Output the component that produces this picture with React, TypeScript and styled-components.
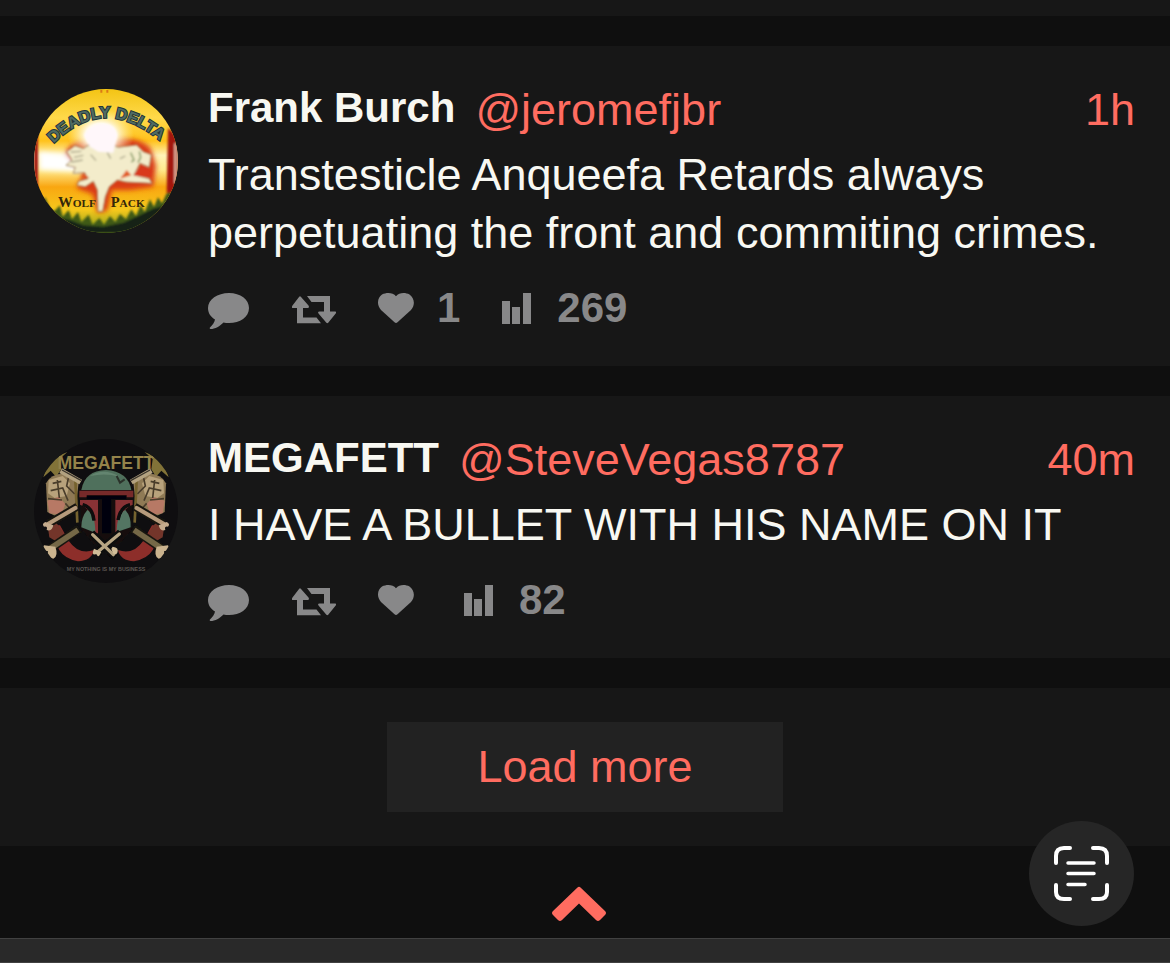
import React from "react";
import styled, { createGlobalStyle } from "styled-components";

const GlobalStyle = createGlobalStyle`
  * { box-sizing: border-box; }
  body {
    margin: 0;
    background: #0f0f0f;
    color: #f8f8f2;
    font-family: "Liberation Sans", Arial, Helvetica, sans-serif;
  }
`;

const Page = styled.div`
  min-height: 100vh;
  display: flex;
  flex-direction: column;
`;

const Timeline = styled.main`
  display: flex;
  flex-direction: column;
  gap: 30px;
`;

const PreviousCard = styled.div`
  height: 16px;
  background: #171717;
`;

const Card = styled.article`
  display: flex;
  gap: 30px;
  padding: 38px 35px 34px 34px;
  background: #171717;
`;

const AvatarLink = styled.a`
  flex: none;
  width: 144px;
  height: 144px;
  margin-top: 5px;
  border-radius: 50%;
  overflow: hidden;

  svg { display: block; width: 100%; height: 100%; }
`;

const Content = styled.div`
  flex: 1;
  min-width: 0;
`;

const Header = styled.header`
  display: flex;
  align-items: flex-start;
  margin-bottom: 10px;
`;

const Name = styled.a`
  margin-right: 20px;
  color: #f8f8f2;
  font-size: 42px;
  font-weight: 700;
  line-height: 48px;
  text-decoration: none;
`;

const Handle = styled.a`
  color: #ff6c60;
  font-size: 45px;
  line-height: 52px;
  text-decoration: none;
`;

const Time = styled(Handle)`
  margin-left: auto;
`;

const Message = styled.p`
  margin: 0 0 22px;
  font-size: 45px;
  line-height: 58px;
`;

const Metrics = styled.div`
  display: flex;
  align-items: center;
  gap: 42px;
  height: 48px;
`;

const Metric = styled.button<{ $icon: number }>`
  display: flex;
  align-items: center;
  gap: 15px;
  padding: 0;
  border: 0;
  background: none;
  color: #888889;
  font: 700 42px/48px "Liberation Sans", Arial, Helvetica, sans-serif;
  cursor: pointer;

  svg {
    flex: none;
    display: block;
    width: ${(p) => p.$icon}px;
    height: 48px;
    fill: currentColor;
  }
`;

const LoadCard = styled.div`
  display: flex;
  justify-content: center;
  padding: 34px;
  background: #171717;
`;

const LoadButton = styled.button`
  width: 396px;
  height: 90px;
  border: 0;
  background: #222;
  color: #ff6c60;
  font: 45px/52px "Liberation Sans", Arial, Helvetica, sans-serif;
  cursor: pointer;
`;

const TopArea = styled.nav`
  flex: 1;
  display: flex;
  justify-content: center;
  align-items: flex-start;
  min-height: 92px;
  padding: 39px 12px 0 0;
`;

const TopLink = styled.a`
  display: block;
  width: 56px;
  height: 38px;

  svg { display: block; }
`;

const Toolbar = styled.footer`
  height: 25px;
  border-top: 1px solid #414141;
  border-bottom: 1px solid #414141;
  background: #292929;
`;

const ScanButton = styled.button`
  position: fixed;
  right: 36px;
  bottom: 37px;
  width: 105px;
  height: 105px;
  padding: 0;
  border: 0;
  border-radius: 50%;
  background: #262626;
  cursor: pointer;

  svg { display: block; }
`;

function WolfAvatar() {
  return (
    <svg viewBox="42 27 432 432" aria-hidden="true">
      <defs>
        <linearGradient id="sky" x1="0" y1="0" x2="0" y2="1">
          <stop offset="0" stopColor="#f3c414" />
          <stop offset="0.2" stopColor="#ffd94a" />
          <stop offset="0.36" stopColor="#ffc21c" />
          <stop offset="0.46" stopColor="#fff3b8" />
          <stop offset="0.56" stopColor="#ffeb8e" />
          <stop offset="0.68" stopColor="#f9a611" />
          <stop offset="0.84" stopColor="#f6c81c" />
          <stop offset="1" stopColor="#7d9a1c" />
        </linearGradient>
        <radialGradient id="glow">
          <stop offset="0" stopColor="#fff" />
          <stop offset="0.45" stopColor="#fffdf4" stopOpacity="0.95" />
          <stop offset="1" stopColor="#fff2a0" stopOpacity="0" />
        </radialGradient>
        <filter id="soft"><feGaussianBlur stdDeviation="3" /></filter>
        <filter id="softer"><feGaussianBlur stdDeviation="8" /></filter>
        <path id="arch" d="M104 188 Q250 44 416 180" />
      </defs>
      <rect x="42" y="27" width="432" height="432" fill="url(#sky)" />
      <g filter="url(#softer)">
        <path d="M58 215 L170 225 L175 275 L58 270Z" fill="#fff" />
        <path d="M135 218 Q165 172 205 188 L300 175 Q365 175 392 205 L408 258 L400 320 L330 330 L275 330 L262 392 L232 398 L218 342 L170 325 L190 280Z" fill="#d93a14" />
      </g>
      <ellipse cx="242" cy="165" rx="100" ry="78" fill="url(#glow)" />
      <g filter="url(#soft)">
        <path d="M42 150 H54 V330 H42Z M444 145 L474 170 V340 H440Z" fill="#a31708" />
        <path d="M466 190 V310" stroke="#f3d6c0" strokeWidth="5" />
        <path d="M140 215 L165 197 L190 206 L214 190 L270 190 L294 202 L350 195 L370 215 L394 224 L388 262 L360 250 L342 285 L388 296 L396 310 L318 306 L292 300 L268 320 L256 350 L248 394 L234 394 L232 330 L220 304 L196 320 L172 316 L176 304 L204 296 L194 278 L160 280 L166 262 L138 256 L156 240Z" fill="#f3eccb" stroke="#a2835d" strokeWidth="3" />
        <path d="M192 165 Q212 130 250 132 Q285 132 292 165 L280 218 L235 215 L210 200Z" fill="#fff7fa" />
        <path d="M152 216 L184 214 M162 232 L190 226 M154 246 L188 240 M212 224 L228 242 M262 218 L272 236 M300 236 L316 228" fill="none" stroke="#aaa68a" strokeWidth="4" />
        <path d="M332 218 L342 240 L334 246 M358 214 L362 232 L354 248" stroke="#8fa06c" strokeWidth="5" fill="none" />
        <path d="M340 286 L366 256 L394 272 L390 294Z" fill="#d9371b" />
        <path d="M180 290 L196 284 L208 294Z M300 296 L320 270 L334 286Z" fill="#e15b22" />
        <path d="M42 330 L64 370 L76 352 L90 388 L102 394 L120 376 L128 410 L146 390 L156 418 L174 396 L184 426 L206 404 L218 434 L238 414 L252 434 L270 408 L286 426 L300 402 L318 418 L334 388 L348 408 L362 374 L374 396 L390 358 L402 380 L414 352 L426 370 L440 340 L474 335 V459 H42Z" fill="#405a16" />
        <path d="M42 395 L80 388 L110 412 L150 420 L190 436 L250 440 L310 428 L350 410 L400 386 L474 364 V459 H42Z" fill="#122419" />
      </g>
      <text textAnchor="middle" fontFamily="Liberation Sans Narrow, Liberation Sans, sans-serif" fontWeight="700" fontSize="48" fill="#4f6b62" stroke="#24353a" strokeWidth="6" paintOrder="stroke">
        <textPath href="#arch" startOffset="50%">DEADLY DELTA</textPath>
      </text>
      <g fontFamily="Liberation Serif, serif" fontWeight="700" fill="#352709">
        <text x="114" y="382" fontSize="44">W<tspan fontSize="34">OLF</tspan></text>
        <text x="272" y="380" fontSize="44">P<tspan fontSize="34">ACK</tspan></text>
      </g>
      <path d="M244 30 V38 M262 30 V38" stroke="#dc7b16" strokeWidth="6" />
    </svg>
  );
}

function SkullSide() {
  return (
    <g>
      <path d="M78 160 Q94 126 145 132 L176 158 L170 208 L154 250 L118 264 L82 246Z" fill="#8f7a55" />
      <path d="M86 150 L128 138 L150 160 L140 198 L104 204 L84 190Z" fill="#b8a27b" />
      <path d="M82 212 L116 200 L136 222 L124 254 L88 250Z" fill="#b77965" />
      <path d="M98 160 L124 154 M92 182 L128 174 L144 212 M112 150 L118 204 M146 140 L140 168 L164 192 M84 206 L126 210 M136 220 L154 240" stroke="#4a3d2c" strokeWidth="5" fill="none" />
      <path d="M166 148 L172 278" stroke="#74622e" strokeWidth="8" />
      <path d="M108 286 Q94 380 174 394 Q215 392 222 360 Q176 376 146 332 L120 286Z" fill="#8d2e2b" />
      <path d="M82 280 L110 280 L132 310 L112 336 L88 322Z" fill="#73362b" />
      <path d="M84 282 L172 230" stroke="#191511" strokeWidth="24" />
      <path d="M84 282 L166 234" stroke="#b69b7b" strokeWidth="13" strokeLinecap="round" />
      <path d="M76 276 Q64 282 72 290 Q84 288 80 300 Q96 306 100 286" fill="#c5ab8d" />
      <path d="M82 362 L178 296" stroke="#171411" strokeWidth="26" />
      <path d="M90 356 L174 300" stroke="#756846" strokeWidth="17" />
      <path d="M72 346 Q62 360 84 364 Q78 384 100 386 Q116 378 106 350Z" fill="#cab38e" />
      <path d="M122 122 L182 156" stroke="#b3a280" strokeWidth="16" />
      <path d="M126 120 L184 152" stroke="#39342b" strokeWidth="4" />
    </g>
  );
}

function HelmetAvatar() {
  return (
    <svg viewBox="42 27 432 432" aria-hidden="true">
      <defs>
        <filter id="worn"><feGaussianBlur stdDeviation="2" /></filter>
      </defs>
      <rect x="42" y="27" width="432" height="432" fill="#0f0e10" />
      <g filter="url(#worn)">
        <path d="M70 142 Q84 88 142 66 L118 88 L124 118 L108 140 L92 122Z" fill="#827337" />
        <path d="M446 142 Q432 88 374 66 L398 88 L394 118 L408 140 L424 122Z" fill="#827337" />
        <SkullSide />
        <g transform="translate(516 0) scale(-1 1)"><SkullSide /></g>
        <path d="M180 204 Q180 124 258 120 Q338 124 338 204 L334 300 L296 344 L222 344 L182 294Z" fill="#14110f" />
        <path d="M184 180 Q194 122 258 120 Q324 124 334 180Z" fill="#50705b" />
        <path d="M210 138 Q252 112 298 140 Q258 128 210 138Z" fill="#648570" />
        <path d="M290 138 L300 158 L314 148" stroke="#2b332b" strokeWidth="6" fill="none" />
        <path d="M178 182 H340 V202 H178Z" fill="#772b2c" />
        <path d="M180 210 H234 V310 H224 Q222 238 180 224Z M338 210 H286 V310 H296 Q298 238 338 224Z" fill="#883034" />
        <path d="M200 196 H320 V208 H274 V310 H246 V208 H200Z" fill="#060607" />
        <path d="M202 240 Q226 252 226 308 L184 292 Q184 260 202 240Z M316 240 Q290 254 290 306 L332 292 Q334 260 316 240Z" fill="#537562" />
        <path d="M188 224 Q218 232 222 272 M330 224 Q302 230 294 270" stroke="#070708" strokeWidth="10" fill="none" />
        <path d="M214 310 L286 380 M302 308 L228 372" stroke="#0c0b0b" strokeWidth="24" />
        <path d="M218 314 L280 374 M298 312 L230 368" stroke="#b8a684" strokeWidth="10" strokeLinecap="round" />
        <path d="M222 356 Q212 378 230 372 Q234 388 244 366Z M274 356 Q282 384 292 368 Q298 352 278 350Z" fill="#d1bd98" />
      </g>
      <g textAnchor="middle" fontFamily="Liberation Sans, sans-serif" fontWeight="700">
        <text x="258" y="116" fontSize="53" fill="#94834a">MEGAFETT</text>
        <text x="258" y="422" fontSize="16" fill="#5c5752">MY NOTHING IS MY BUSINESS</text>
      </g>
    </svg>
  );
}

function CommentIcon() {
  return (
    <svg viewBox="0 0 42 48">
      <path d="M21 9C32.500 9 41 15.500 41 24C41 33 32 39 21 39C19 39 17 38.700 15.500 38.400C12 42 7 45 2.500 45C1.600 45 1.400 44 2.200 43.300C4.500 41 6.400 38.500 7 35.500C2.700 33 0 29 0 24C0 15.500 9.500 9 21 9Z" />
    </svg>
  );
}

function RepeatIcon() {
  return (
    <svg viewBox="0 0 44 48">
      <path d="M7.200 12.700Q8 11.800 8.800 12.700L16.500 21.500Q17.800 24 15.500 24H11V33.500H24.500L29 39.300H5V24H1Q-1 24 .5 21.500Z M15 12H38V27.500H43Q45 27.500 43.700 29.500L36.200 38.800Q35.300 39.700 34.400 38.800L26.500 29.500Q25.300 27.500 27.500 27.500H32V18H19.500Z" />
    </svg>
  );
}

function HeartIcon() {
  return (
    <svg viewBox="0 0 44 48">
      <path d="M18 12.200C21 8.500 27 8 31.500 10.500C36.500 14 37.500 21 33 26L19.500 38.300Q18 39.500 16.500 38.300L3 26C-1.500 21 -.8 14 4 10.500C8.800 8 15 8.500 18 12.200Z" />
    </svg>
  );
}

function BarsIcon() {
  return (
    <svg viewBox="0 0 40 48">
      <path d="M0 17H8V40H0Z M10 23H18V40H10Z M21 9H29V40H21Z" />
    </svg>
  );
}

interface Post {
  name: string;
  handle: string;
  time: string;
  text: string;
  likes?: number;
  views: number;
  avatar: React.ReactNode;
}

const posts: Post[] = [
  {
    name: "Frank Burch",
    handle: "@jeromefjbr",
    time: "1h",
    text: "Transtesticle Anqueefa Retards always perpetuating the front and commiting crimes.",
    likes: 1,
    views: 269,
    avatar: <WolfAvatar />,
  },
  {
    name: "MEGAFETT",
    handle: "@SteveVegas8787",
    time: "40m",
    text: "I HAVE A BULLET WITH HIS NAME ON IT",
    views: 82,
    avatar: <HelmetAvatar />,
  },
];

function PostCard({ post }: { post: Post }) {
  return (
    <Card>
      <AvatarLink href="#profile" aria-label={post.name}>{post.avatar}</AvatarLink>
      <Content>
        <Header>
          <Name href="#profile">{post.name}</Name>
          <Handle href="#profile">{post.handle}</Handle>
          <Time href="#post">{post.time}</Time>
        </Header>
        <Message>{post.text}</Message>
        <Metrics>
          <Metric $icon={42} aria-label="Reply"><CommentIcon /></Metric>
          <Metric $icon={44} aria-label="Repost"><RepeatIcon /></Metric>
          <Metric $icon={44} aria-label="Like"><HeartIcon />{post.likes}</Metric>
          <Metric $icon={40} aria-label="Views"><BarsIcon />{post.views}</Metric>
        </Metrics>
      </Content>
    </Card>
  );
}

export default function App() {
  return (
    <Page>
      <GlobalStyle />
      <Timeline>
        <PreviousCard />
        {posts.map((post) => <PostCard key={post.handle} post={post} />)}
        <LoadCard><LoadButton>Load more</LoadButton></LoadCard>
      </Timeline>
      <TopArea>
        <TopLink href="#top" aria-label="Back to top">
          <svg width="56" height="38" viewBox="0 0 56 38">
            <path d="M26.500 2.500Q28 1 29.500 2.500L54 26Q56 28 54 30L49 35Q47 37 45 35L28 18.500L11 35Q9 37 7 35L2 30Q0 28 2 26Z" fill="#ff6c60" />
          </svg>
        </TopLink>
      </TopArea>
      <Toolbar />
      <ScanButton aria-label="Scan text">
        <svg width="105" height="105" viewBox="0 0 105 105" fill="none" stroke="#fff" strokeLinecap="round">
          <path d="M27 42V35Q27 27 35 27H41M64 27H70Q78 27 78 35V42M78 64V71Q78 78 70 78H64M41 78H35Q27 78 27 71V64" strokeWidth="4" />
          <path d="M39 42H65M39 52.500H65M39 63.500H56" strokeWidth="3.500" />
        </svg>
      </ScanButton>
    </Page>
  );
}
